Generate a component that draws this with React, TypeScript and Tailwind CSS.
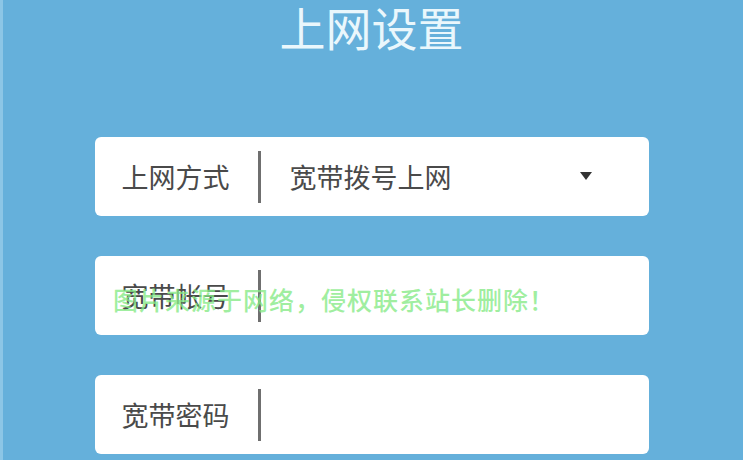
import React from "react";

const font = { fontFamily: '"Noto Sans CJK SC", "Noto Sans", sans-serif' };

function Field({ label, value, dropdown }: { label: string; value?: string; dropdown?: boolean }) {
  return (
    <div className="w-[554px] h-[79px] bg-white rounded-[6px] flex items-center pl-[27px] pr-[57px] text-[#4a4a4a] text-[27px] leading-none">
      <span className="w-[108px]">{label}</span>
      <div className="ml-[28px] w-[3px] h-[52px] bg-[#6f6f6f]" />
      <span className="ml-[29px] flex-1">{value}</span>
      {dropdown && (
        <svg width="12" height="8" viewBox="0 0 12 8" className="mb-[2px]">
          <path d="M0 0 L12 0 L6 8 Z" fill="#333" />
        </svg>
      )}
    </div>
  );
}

export default function App() {
  return (
    <div className="relative w-[743px] h-[460px] overflow-hidden bg-[#65b0db] flex flex-col items-center" style={font}>
      <div className="absolute left-0 top-0 bottom-0 w-[3px] bg-[#8cc6e6]" />
      <h1 className="mt-[3px] text-[46px] leading-none text-[#eaf7fc]">上网设置</h1>
      <div className="mt-[88px] flex flex-col gap-[40px]">
        <Field label="上网方式" value="宽带拨号上网" dropdown />
        <Field label="宽带帐号" />
        <Field label="宽带密码" />
      </div>
      <div className="absolute left-[113px] top-[287px] text-[25px] leading-none text-[#86ea86]/80 font-medium tracking-[1px]">
        图片来源于网络，侵权联系站长删除！
      </div>
    </div>
  );
}
